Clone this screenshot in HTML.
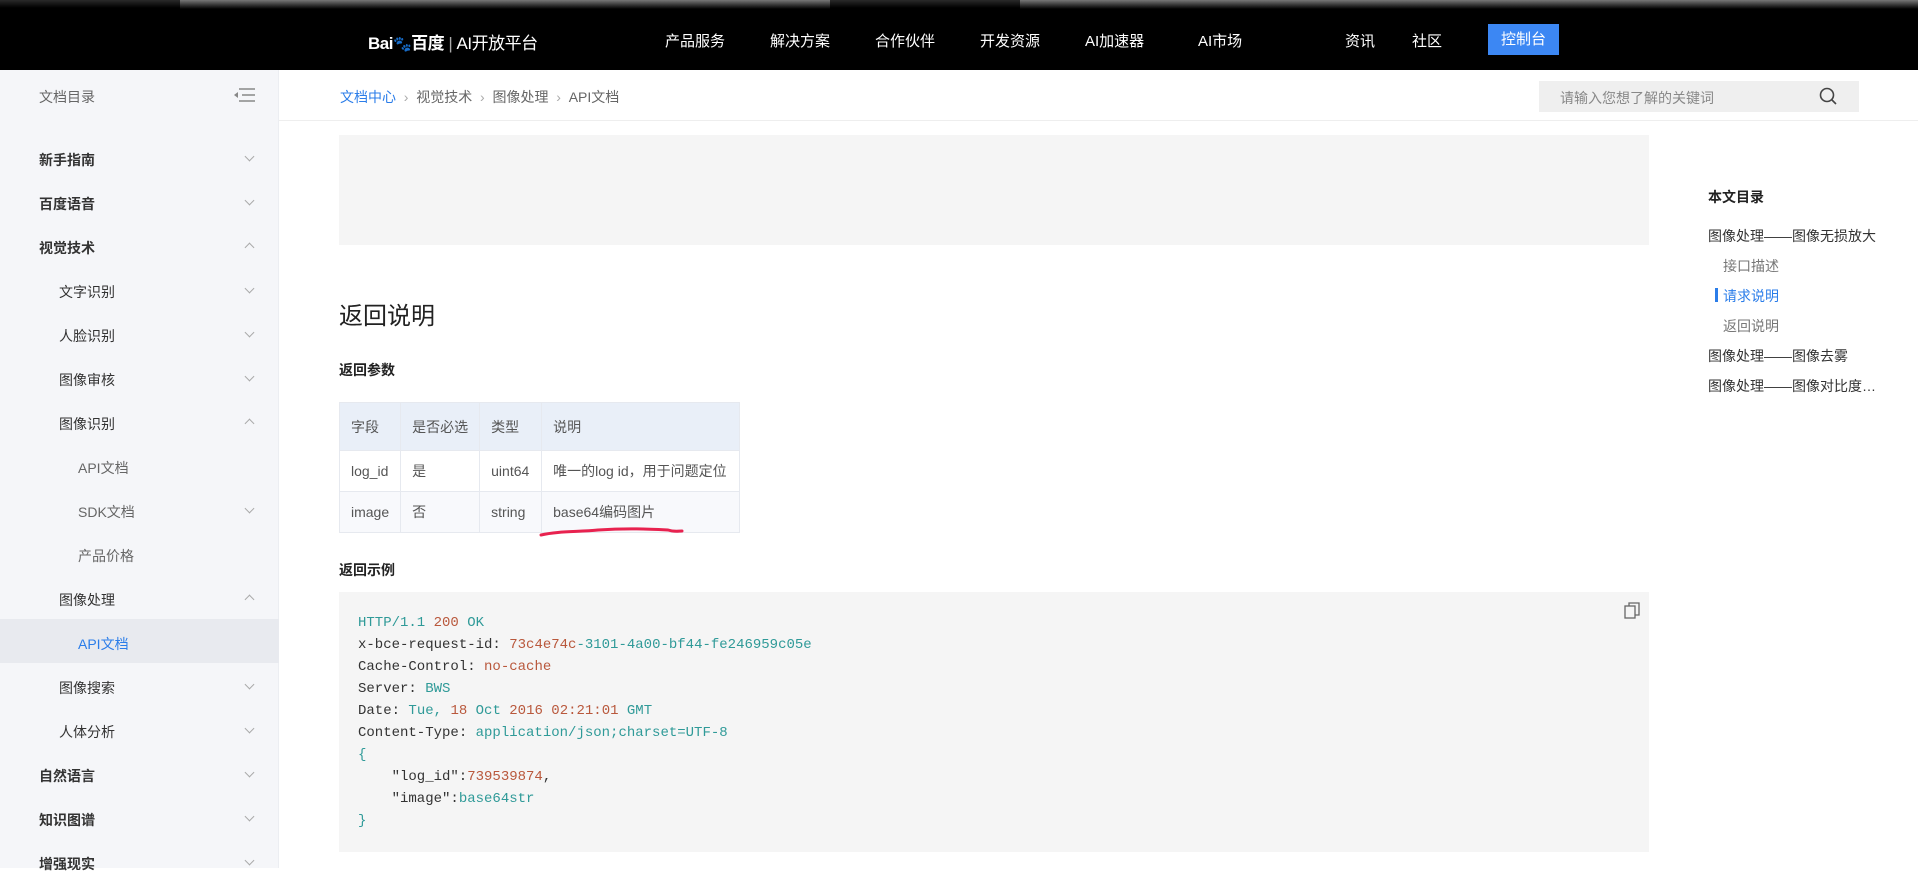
<!DOCTYPE html>
<html><head><meta charset="utf-8"><style>
*{margin:0;padding:0;box-sizing:border-box}
body{width:1918px;height:868px;overflow:hidden;background:#fff;font-family:"Liberation Sans","Noto Sans CJK SC",sans-serif;position:relative;color:#333}
.abs{position:absolute;white-space:nowrap}
.hdr{position:absolute;left:0;top:0;width:1918px;height:70px;background:#000}
.strip{position:absolute;top:0;height:8px;background:linear-gradient(180deg,#777,#222 70%,#000)}
.nav{color:#fff;font-size:15px;top:30px}
.side{position:absolute;left:0;top:70px;width:279px;height:798px;background:#f5f6f9;border-right:1px solid #eceef2}
.si{position:absolute;font-size:14px;color:#333}
.chev{position:absolute;left:246px;width:7px;height:7px;border-right:1px solid #aaa;border-bottom:1px solid #aaa}
.up{transform:rotate(-135deg)}
.dn{transform:rotate(45deg)}
table{border-collapse:collapse;font-size:14px;color:#555}
td{border:1px solid #e6e9ef;padding:0 11px;height:41px}
.code{font-family:"Liberation Mono",monospace;font-size:14px;line-height:22px;color:#333}
.t{color:#2f9a98}.n{color:#b9583c}
.toc{position:absolute;font-size:14px;color:#333;left:1708px}
</style></head><body>
<div class="hdr"></div>
<div class="strip" style="left:0;width:1918px;opacity:.35"></div>
<div class="strip" style="left:180px;width:650px;height:9px"></div>
<div class="strip" style="left:1020px;width:900px;height:9px"></div>
<div class="abs" style="left:368px;top:29px;color:#fff;font-size:17px;font-weight:bold;letter-spacing:-0.5px">Bai<span style="font-size:15px">🐾</span>百度 <span style="font-weight:normal;color:#aaa">|</span> <span style="font-weight:normal">AI开放平台</span></div>
<div class="abs nav" style="left:665px">产品服务</div>
<div class="abs nav" style="left:770px">解决方案</div>
<div class="abs nav" style="left:875px">合作伙伴</div>
<div class="abs nav" style="left:980px">开发资源</div>
<div class="abs nav" style="left:1085px">AI加速器</div>
<div class="abs nav" style="left:1198px">AI市场</div>
<div class="abs nav" style="left:1345px">资讯</div>
<div class="abs nav" style="left:1412px">社区</div>
<div class="abs" style="left:1488px;top:24px;width:71px;height:31px;background:#3c87f3;color:#fff;font-size:15px;text-align:center;line-height:31px">控制台</div>

<div class="side"></div>
<div class="si" style="left:39px;top:87px;color:#666">文档目录</div>
<svg class="abs" style="left:232px;top:87px" width="24" height="16"><path d="M7 2h16M10 8h13M7 14h16" stroke="#888" stroke-width="1.6"/><path d="M6 5L2 8l4 3z" fill="#888"/></svg>
<div class="si" style="left:39px;top:150px;font-weight:bold">新手指南</div><div class="chev dn" style="top:153px"></div>
<div class="si" style="left:39px;top:194px;font-weight:bold">百度语音</div><div class="chev dn" style="top:197px"></div>
<div class="si" style="left:39px;top:238px;font-weight:bold">视觉技术</div><div class="chev up" style="top:244px"></div>
<div class="si" style="left:59px;top:282px">文字识别</div><div class="chev dn" style="top:285px"></div>
<div class="si" style="left:59px;top:326px">人脸识别</div><div class="chev dn" style="top:329px"></div>
<div class="si" style="left:59px;top:370px">图像审核</div><div class="chev dn" style="top:373px"></div>
<div class="si" style="left:59px;top:414px">图像识别</div><div class="chev up" style="top:420px"></div>
<div class="si" style="left:78px;top:458px;color:#666">API文档</div>
<div class="si" style="left:78px;top:502px;color:#666">SDK文档</div><div class="chev dn" style="top:505px"></div>
<div class="si" style="left:78px;top:546px;color:#666">产品价格</div>
<div class="si" style="left:59px;top:590px">图像处理</div><div class="chev up" style="top:596px"></div>
<div class="abs" style="left:0;top:619px;width:279px;height:44px;background:#e8eaef"></div>
<div class="si" style="left:78px;top:634px;color:#2b7de9">API文档</div>
<div class="si" style="left:59px;top:678px">图像搜索</div><div class="chev dn" style="top:681px"></div>
<div class="si" style="left:59px;top:722px">人体分析</div><div class="chev dn" style="top:725px"></div>
<div class="si" style="left:39px;top:766px;font-weight:bold">自然语言</div><div class="chev dn" style="top:769px"></div>
<div class="si" style="left:39px;top:810px;font-weight:bold">知识图谱</div><div class="chev dn" style="top:813px"></div>
<div class="si" style="left:39px;top:854px;font-weight:bold">增强现实</div><div class="chev dn" style="top:857px"></div>

<div class="abs" style="left:340px;top:87px;font-size:14px;color:#666"><span style="color:#2b7de9">文档中心</span> &nbsp;<span style="color:#aaa">›</span>&nbsp; 视觉技术 &nbsp;<span style="color:#aaa">›</span>&nbsp; 图像处理 &nbsp;<span style="color:#aaa">›</span>&nbsp; API文档</div>
<div class="abs" style="left:1539px;top:81px;width:320px;height:31px;background:#efefef;font-size:14px;color:#888;padding:7px 0 0 21px">请输入您想了解的关键词</div>
<svg class="abs" style="left:1818px;top:86px" width="20" height="20"><circle cx="9" cy="9" r="6.5" fill="none" stroke="#444" stroke-width="1.6"/><path d="M14 14l4 4" stroke="#444" stroke-width="1.6"/></svg>
<div class="abs" style="left:279px;top:120px;width:1639px;height:1px;background:#eee"></div>

<div class="abs" style="left:339px;top:135px;width:1310px;height:110px;background:#f5f5f5"></div>
<div class="abs" style="left:339px;top:296px;font-size:24px;color:#222">返回说明</div>
<div class="abs" style="left:339px;top:360px;font-size:14px;font-weight:bold;color:#222">返回参数</div>
<table class="abs" style="left:339px;top:402px">
<tr style="background:#e9eff8;height:48px"><td style="width:61px;height:48px">字段</td><td style="width:77px">是否必选</td><td style="width:62px">类型</td><td style="width:198px">说明</td></tr>
<tr><td>log_id</td><td>是</td><td>uint64</td><td>唯一的log id，用于问题定位</td></tr>
<tr style="background:#f8f9fc"><td>image</td><td>否</td><td>string</td><td>base64编码图片</td></tr>
</table>
<svg class="abs" style="left:538px;top:525px" width="146" height="14"><path d="M3 10C20 6 40 7 60 5C90 3 110 4 130 5C136 7 140 6 144 6" fill="none" stroke="#e8224f" stroke-width="3" stroke-linecap="round"/></svg>
<div class="abs" style="left:339px;top:560px;font-size:14px;font-weight:bold;color:#222">返回示例</div>
<div class="abs" style="left:339px;top:592px;width:1310px;height:260px;background:#f5f5f5"></div>
<svg class="abs" style="left:1624px;top:602px" width="16" height="17"><rect x="1" y="4" width="10" height="12" fill="none" stroke="#666" stroke-width="1.3"/><path d="M5 4V1h10v12h-4" fill="none" stroke="#666" stroke-width="1.3"/></svg>
<div class="abs code" style="left:358px;top:612px">
<div><span class="t">HTTP/1.1</span> <span class="n">200</span> <span class="t">OK</span></div>
<div>x-bce-request-id: <span class="n">73c4e74c</span><span class="t">-3101-4a00-bf44-fe246959c05e</span></div>
<div>Cache-Control: <span class="n">no-cache</span></div>
<div>Server: <span class="t">BWS</span></div>
<div>Date: <span class="t">Tue,</span> <span class="n">18</span> <span class="t">Oct</span> <span class="n">2016 02:21:01</span> <span class="t">GMT</span></div>
<div>Content-Type: <span class="t">application/json;charset=UTF-8</span></div>
<div><span class="t">{</span></div>
<div style="padding-left:33.6px">"log_id":<span class="n">739539874</span>,</div>
<div style="padding-left:33.6px">"image":<span class="t">base64str</span></div>
<div><span class="t">}</span></div>
</div>

<div class="toc" style="top:187px;font-weight:bold;color:#222">本文目录</div>
<div class="toc" style="top:226px">图像处理——图像无损放大</div>
<div class="toc" style="top:256px;left:1723px;color:#777">接口描述</div>
<div class="abs" style="left:1715px;top:288px;width:3px;height:14px;background:#2b7de9"></div>
<div class="toc" style="top:286px;left:1723px;color:#2b7de9">请求说明</div>
<div class="toc" style="top:316px;left:1723px;color:#777">返回说明</div>
<div class="toc" style="top:346px">图像处理——图像去雾</div>
<div class="toc" style="top:376px">图像处理——图像对比度…</div>
</body></html>
